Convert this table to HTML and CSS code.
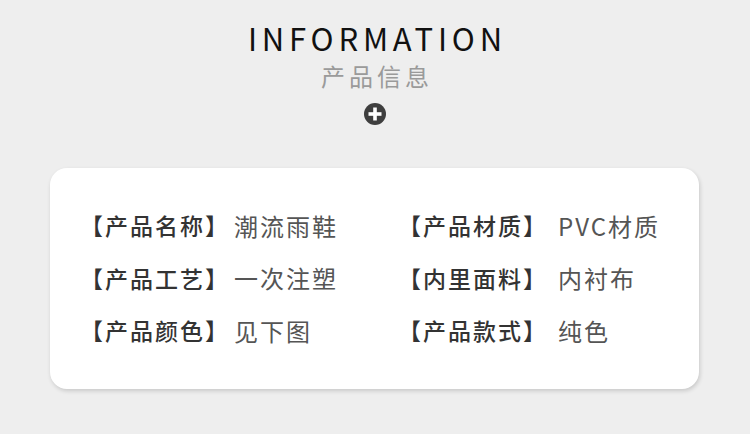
FILE: index.html
```html
<!DOCTYPE html>
<html lang="zh">
<head>
<meta charset="utf-8">
<link rel="stylesheet" href="styles.css">
</head>
<body>
<div class="page">
  <header class="head">
    <h1 class="title">INFORMATION</h1>
    <p class="subtitle">产品信息</p>
    <svg class="plus" width="22" height="22" viewBox="0 0 22 22" aria-hidden="true">
      <circle cx="11" cy="11" r="11" fill="#3e3e3e"/>
      <rect x="4.5" y="9.2" width="13" height="3.6" fill="#fff"/>
      <rect x="9.2" y="4.5" width="3.6" height="13" fill="#fff"/>
    </svg>
  </header>
  <section class="card">
    <div class="grid">
      <div class="item"><span class="label">【产品名称】</span><span class="value">潮流雨鞋</span></div>
      <div class="item"><span class="label">【产品材质】</span><span class="value">PVC材质</span></div>
      <div class="item"><span class="label">【产品工艺】</span><span class="value">一次注塑</span></div>
      <div class="item"><span class="label">【内里面料】</span><span class="value">内衬布</span></div>
      <div class="item"><span class="label">【产品颜色】</span><span class="value">见下图</span></div>
      <div class="item"><span class="label">【产品款式】</span><span class="value">纯色</span></div>
    </div>
  </section>
</div>
</body>
</html>
```

FILE: styles.css
```css
* { box-sizing: border-box; }
html, body { margin: 0; padding: 0; }
body {
  background: #eeeeee;
  font-family: "Noto Sans CJK SC", "Noto Sans", sans-serif;
  width: 750px;
  height: 434px;
  overflow: hidden;
}
.page {
  padding-top: 17px;
}
.head {
  display: flex;
  flex-direction: column;
  align-items: center;
}
.title {
  margin: 0;
  font-size: 31px;
  font-weight: 400;
  line-height: 42px;
  letter-spacing: 4.8px;
  padding-left: 4.8px;
  color: #111;
}
.subtitle {
  margin: 0;
  font-size: 24px;
  line-height: 34px;
  letter-spacing: 4px;
  padding-left: 4px;
  color: #9a9a9a;
}
.plus {
  display: block;
  margin-top: 10px;
}
.card {
  margin: 43px 0 0 50px;
  width: 649px;
  height: 221px;
  background: #fff;
  border-radius: 17px;
  box-shadow: 1px 2px 4px rgba(0,0,0,0.16);
  padding: 31px 0 0 30px;
}
.grid {
  display: grid;
  grid-template-columns: 318px 300px;
}
.item {
  display: flex;
  align-items: center;
  height: 52.5px;
  font-size: 23px;
  letter-spacing: 2px;
}
.label {
  flex: none;
  width: 154px;
  font-weight: 500;
  color: #333;
}
.item:nth-child(even) .label {
  width: 160px;
}
.value {
  color: #555;
  font-size: 24px;
  letter-spacing: 2px;
}
```
